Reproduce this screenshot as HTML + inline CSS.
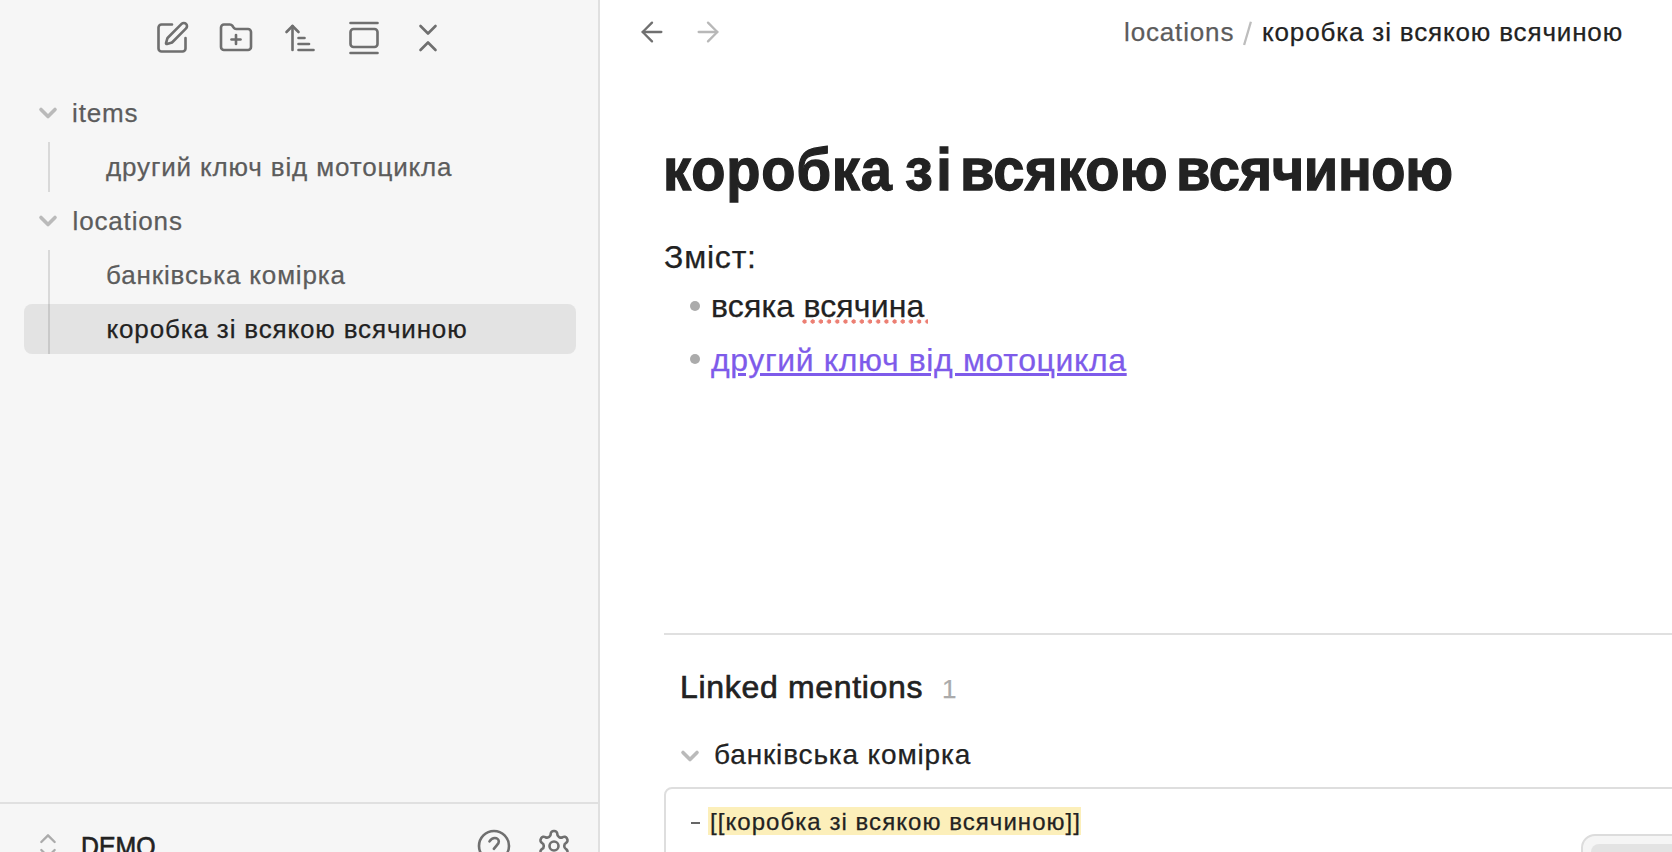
<!DOCTYPE html>
<html><head><meta charset="utf-8">
<style>
html,body{margin:0;padding:0;width:1672px;height:852px;overflow:hidden;background:#fff;font-family:"Liberation Sans",sans-serif;}
.a{position:absolute;white-space:nowrap;-webkit-text-stroke-width:0.25px;}
#side{position:absolute;left:0;top:0;width:598px;height:852px;background:#f6f6f6;border-right:2px solid #e0e0e0;}
svg.i{position:absolute;fill:none;stroke:currentColor;stroke-linecap:round;stroke-linejoin:round;}
.tb{color:#6f6f6f;width:36px;height:36px;top:20px;stroke-width:1.75;}
.t26{font-size:26px;line-height:26px;letter-spacing:0.85px;}
.muted{color:#5c5c5c;}
.norm{color:#222;}
.guide{position:absolute;left:48px;width:2px;background:#d9d9d9;}
.chev{color:#bababa;width:28px;height:28px;stroke-width:3.1;}
.ttl{top:143px;font-size:56px;line-height:56px;font-weight:bold;color:#222;-webkit-text-stroke:1.2px #222;transform:scaleY(1.05);transform-origin:0 47px;}
</style></head><body>
<div id="side">
  <!-- toolbar -->
  <svg class="i tb" style="left:154px" viewBox="0 0 24 24"><path d="M12 3H5a2 2 0 0 0-2 2v14a2 2 0 0 0 2 2h14a2 2 0 0 0 2-2v-7"/><path d="M18.375 2.625a1 1 0 0 1 3 3l-9.013 9.014a2 2 0 0 1-.853.505l-2.873.84a.5.5 0 0 1-.62-.62l.84-2.873a2 2 0 0 1 .506-.852z"/></svg>
  <svg class="i tb" style="left:218px" viewBox="0 0 24 24"><path d="M12 10v6"/><path d="M9 13h6"/><path d="M20 20a2 2 0 0 0 2-2V8a2 2 0 0 0-2-2h-7.9a2 2 0 0 1-1.69-.9L9.6 3.9A2 2 0 0 0 7.930 3H4a2 2 0 0 0-2 2v13a2 2 0 0 0 2 2Z"/></svg>
  <svg class="i tb" style="left:282px" viewBox="0 0 24 24"><path d="m3 8 4-4 4 4"/><path d="M7 4v16"/><path d="M11 12h4"/><path d="M11 16h7"/><path d="M11 20h10"/></svg>
  <svg class="i tb" style="left:346px" viewBox="0 0 24 24"><path d="M3 2h18"/><rect width="18" height="12" x="3" y="6" rx="2"/><path d="M3 22h18"/></svg>
  <svg class="i tb" style="left:410px" viewBox="0 0 24 24"><path d="m7 20 5-5 5 5"/><path d="m7 4 5 5 5-5"/></svg>

  <!-- tree -->
  <svg class="i chev" style="left:34px;top:99px" viewBox="0 0 24 24"><path d="m6 9 6 6 6-6"/></svg>
  <div class="a t26 muted" style="left:72px;top:100px">items</div>
  <div class="guide" style="top:142px;height:50px"></div>
  <div class="a t26 muted" style="left:106px;top:154px">другий ключ від мотоцикла</div>
  <svg class="i chev" style="left:34px;top:207px" viewBox="0 0 24 24"><path d="m6 9 6 6 6-6"/></svg>
  <div class="a t26 muted" style="left:72.5px;top:208px">locations</div>
  <div style="position:absolute;left:24px;top:304px;width:552px;height:50px;border-radius:8px;background:#e3e3e3"></div>
  <div class="guide" style="top:250px;height:104px"></div>
  <div class="guide" style="top:304px;height:50px;background:#c9c9c9"></div>
  <div class="a t26 muted" style="left:106px;top:262px">банківська комірка</div>
  <div class="a t26 norm" style="left:106.5px;top:316px">коробка зі всякою всячиною</div>

  <!-- bottom -->
  <div style="position:absolute;left:0;top:802px;width:598px;height:2px;background:#e0e0e0"></div>
  <svg class="i" style="left:32px;top:830px;width:32px;height:32px;color:#ababab;stroke-width:1.75" viewBox="0 0 24 24"><path d="m7 15 5 5 5-5"/><path d="m7 9 5-5 5 5"/></svg>
  <div class="a" style="left:81px;top:834px;font-size:27px;line-height:27px;color:#222;-webkit-text-stroke:0.65px #222;transform:scaleX(0.92);transform-origin:0 0">DEMO</div>
  <svg class="i" style="left:476px;top:828px;width:36px;height:36px;color:#6f6f6f;stroke-width:1.75" viewBox="0 0 24 24"><circle cx="12" cy="12" r="10"/><path d="M9 8.9C9.9 7.5 10.9 6.7 12.5 6.7C14.2 6.7 15.2 7.8 15.2 9C15.2 10 14.7 10.6 14.1 11.2L11.9 13.9"/><path d="M12 17.5h.01"/></svg>
  <svg class="i" style="left:536px;top:828px;width:36px;height:36px;color:#6f6f6f;stroke-width:1.75" viewBox="0 0 24 24"><path d="M12.22 2h-.44a2 2 0 0 0-2 2v.18a2 2 0 0 1-1 1.73l-.43.25a2 2 0 0 1-2 0l-.15-.08a2 2 0 0 0-2.73.73l-.22.38a2 2 0 0 0 .73 2.73l.15.1a2 2 0 0 1 1 1.72v.51a2 2 0 0 1-1 1.74l-.15.09a2 2 0 0 0-.73 2.73l.22.38a2 2 0 0 0 2.730.73l.15-.08a2 2 0 0 1 2 0l.43.25a2 2 0 0 1 1 1.73V20a2 2 0 0 0 2 2h.44a2 2 0 0 0 2-2v-.18a2 2 0 0 1 1-1.73l.43-.25a2 2 0 0 1 2 0l.15.08a2 2 0 0 0 2.73-.73l.22-.39a2 2 0 0 0-.73-2.73l-.15-.08a2 2 0 0 1-1-1.74v-.5a2 2 0 0 1 1-1.74l.15-.09a2 2 0 0 0 .73-2.73l-.22-.38a2 2 0 0 0-2.73-.73l-.15.08a2 2 0 0 1-2 0l-.43-.25a2 2 0 0 1-1-1.73V4a2 2 0 0 0-2-2z"/><circle cx="12" cy="12" r="3"/></svg>
</div>

<!-- main -->
<div id="main">
  <svg class="i" style="left:636px;top:16px;width:32px;height:32px;color:#707070;stroke-width:1.75" viewBox="0 0 24 24"><path d="m12 19-7-7 7-7"/><path d="M19 12H5"/></svg>
  <svg class="i" style="left:692px;top:16px;width:32px;height:32px;color:#b8b8b8;stroke-width:1.75" viewBox="0 0 24 24"><path d="M5 12h14"/><path d="m12 5 7 7-7 7"/></svg>
  <div class="a t26 muted" style="left:1124px;top:19px">locations</div>
  <svg class="i" style="left:1238px;top:16px;width:20px;height:34px;color:#bdbdbd;stroke-width:2.3;stroke-linecap:butt" viewBox="1238 16 20 34"><path d="M1250.9 21.8L1244.1 45"/></svg>
  <div class="a t26 norm" style="left:1262px;top:19px">коробка зі всякою всячиною</div>

  <div class="a ttl" style="left:663px;letter-spacing:0.87px">коробка</div>
  <div class="a ttl" style="left:905px;letter-spacing:3.4px">зі</div>
  <div class="a ttl" style="left:960px;letter-spacing:0.3px">всякою</div>
  <div class="a ttl" style="left:1176px;letter-spacing:-0.38px">всячиною</div>

  <div class="a" style="left:664px;top:241px;font-size:32px;line-height:32px;color:#222;letter-spacing:0.8px">Зміст:</div>
  <div style="position:absolute;left:690px;top:301px;width:10px;height:10px;border-radius:50%;background:#ababab"></div>
  <div class="a" style="left:711px;top:290px;font-size:32px;line-height:32px;color:#222;letter-spacing:0.17px">всяка всячина</div>
  <div style="position:absolute;left:802px;top:319px;width:126px;height:5px;background:radial-gradient(circle at 2.5px 2.5px,#ec7f73 1.9px,transparent 2.4px) 0 0/8.2px 5px repeat-x"></div>
  <div style="position:absolute;left:690px;top:354px;width:10px;height:10px;border-radius:50%;background:#ababab"></div>
  <div class="a" style="left:711px;top:344px;font-size:32px;line-height:32px;color:#7e5bea;letter-spacing:0.62px;text-decoration:underline;text-decoration-thickness:3px;text-underline-offset:2px">другий ключ від мотоцикла</div>

  <div style="position:absolute;left:664px;top:633px;width:1008px;height:2px;background:#e0e0e0"></div>
  <div class="a" style="left:680px;top:671px;font-size:32px;line-height:32px;color:#222;-webkit-text-stroke:0.65px #222;letter-spacing:0.68px">Linked mentions</div>
  <div class="a" style="left:942px;top:676px;font-size:26px;line-height:26px;color:#ababab">1</div>
  <svg class="i chev" style="left:676px;top:742px" viewBox="0 0 24 24"><path d="m6 9 6 6 6-6"/></svg>
  <div class="a" style="left:714px;top:741px;font-size:28px;line-height:28px;color:#222;letter-spacing:0.85px">банківська комірка</div>

  <div style="position:absolute;left:664px;top:787px;width:1100px;height:200px;border:2px solid #dedede;border-radius:8px;box-sizing:border-box;background:#fff"></div>
  <div style="position:absolute;left:691px;top:822px;width:9px;height:2px;background:#666"></div>
  <div style="position:absolute;left:708px;top:807px;width:373px;height:28px;background:#fcefba"></div>
  <div class="a" style="left:710px;top:810px;font-size:24px;line-height:24px;color:#222;letter-spacing:1.05px">[[коробка зі всякою всячиною]]</div>

  <div style="position:absolute;left:1581px;top:834px;width:200px;height:60px;border:2px solid #dcdcdc;border-radius:14px;box-sizing:border-box;background:#f5f5f5"></div>
  <div style="position:absolute;left:1591px;top:844px;width:200px;height:40px;border-radius:8px;background:#e3e3e3"></div>
</div>
</body></html>
